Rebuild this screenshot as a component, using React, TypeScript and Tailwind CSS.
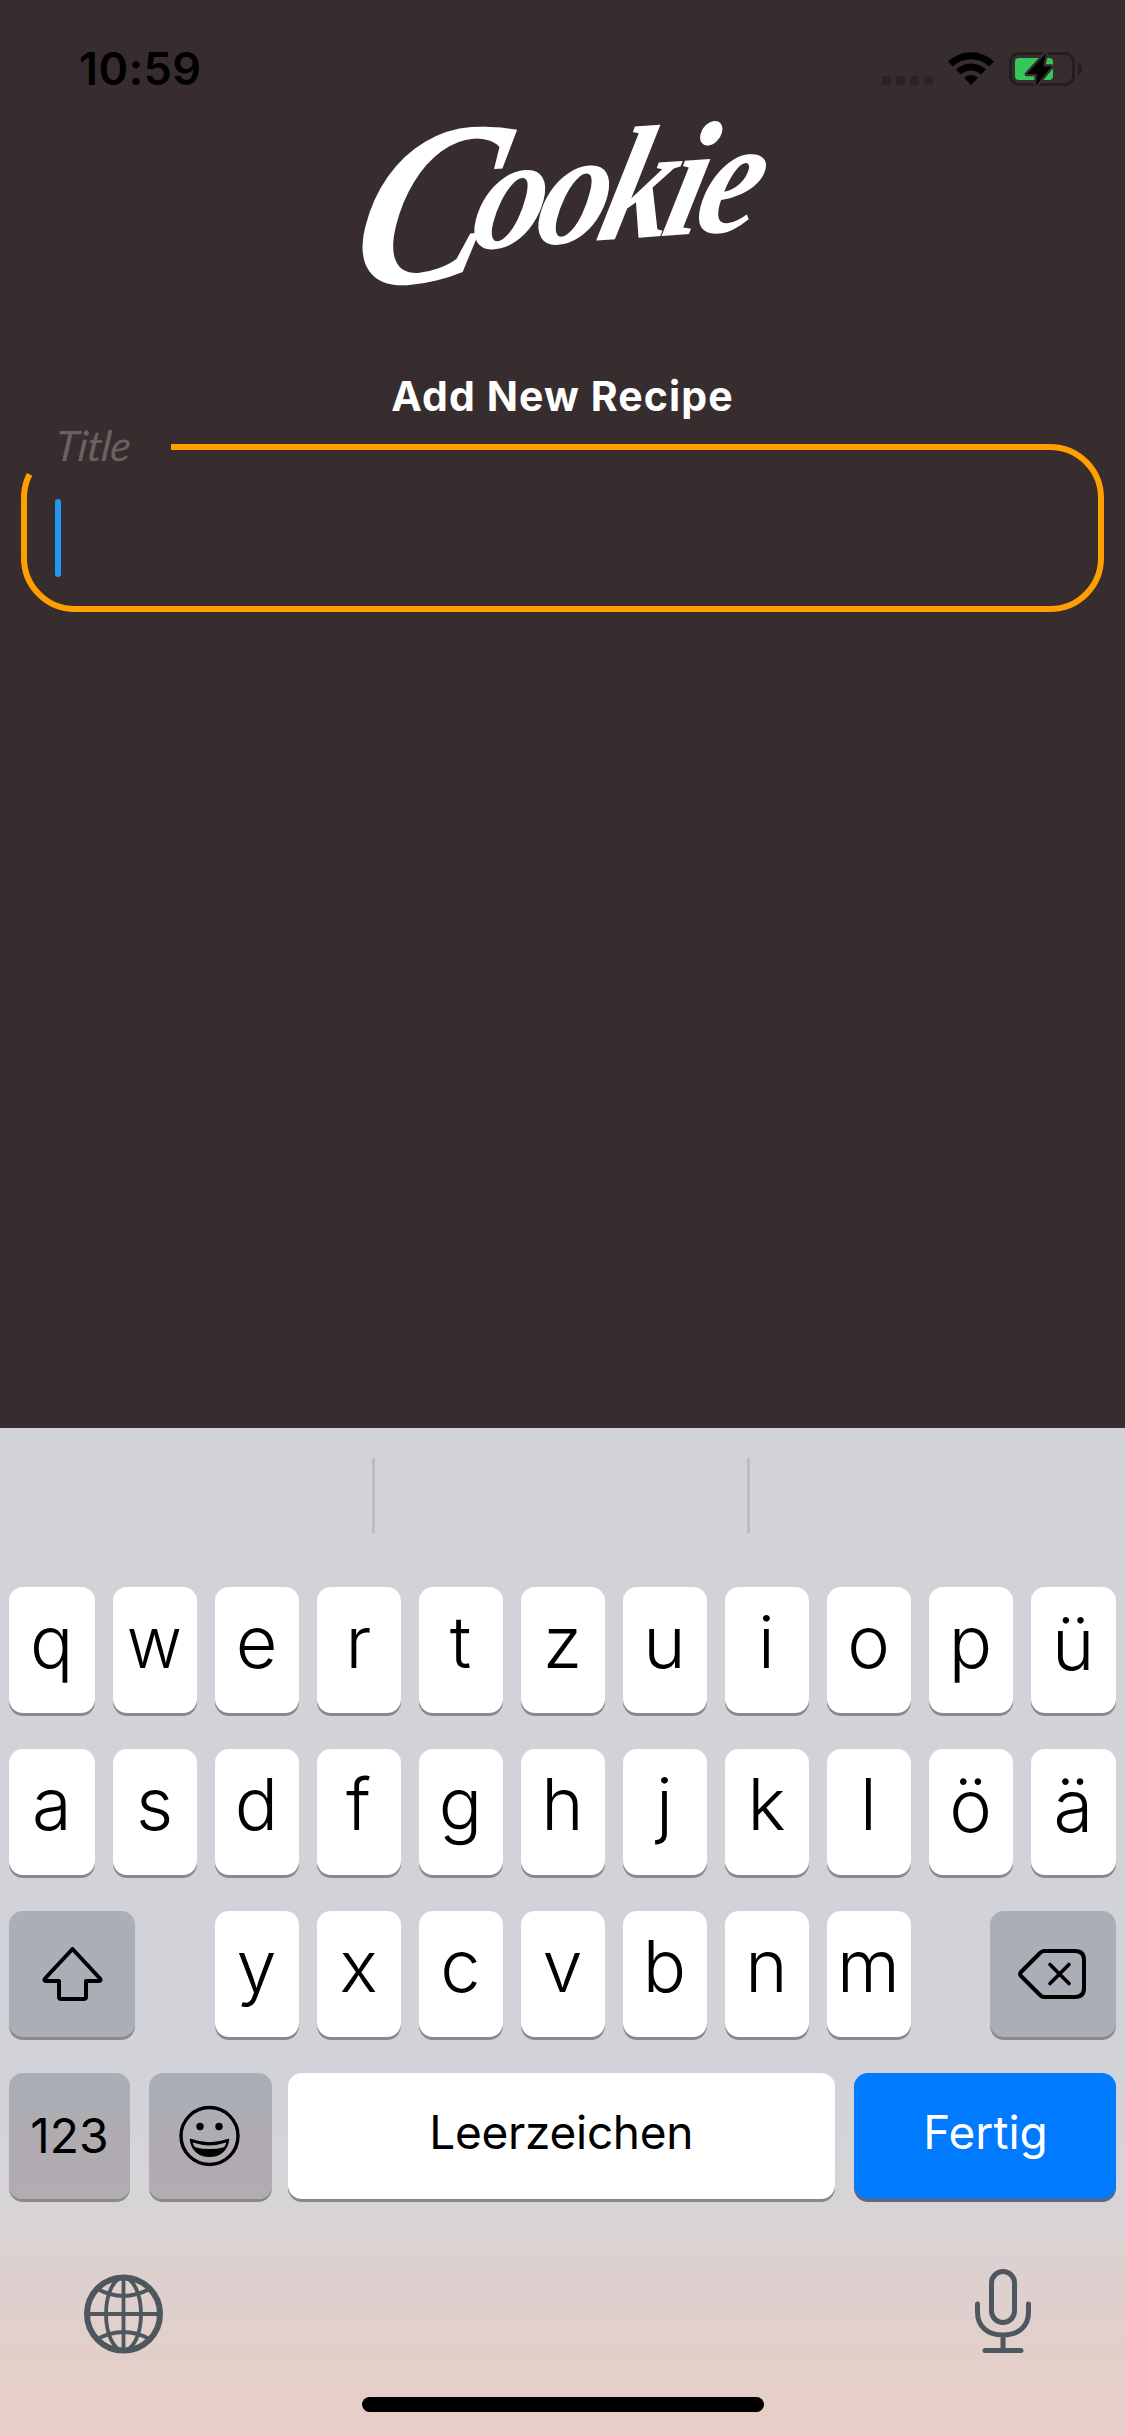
import type { ReactNode } from "react";

function StatusBar() {
  return (
    <div className="flex h-[120px] items-start justify-between pl-[79px] pr-[43px]">
      <span className="pt-[42px] text-[45px] font-semibold leading-[54px] tracking-[0.5px] text-black">10:59</span>
      <div className="flex items-start pt-[52px]">
        <div className="mr-[15px] flex gap-[5px] pt-6">
          <i className="size-[9px] rounded-[3px] bg-[#2a2324]" />
          <i className="size-[9px] rounded-[3px] bg-[#2a2324]" />
          <i className="size-[9px] rounded-[3px] bg-[#2a2324]" />
          <i className="size-[9px] rounded-[3px] bg-[#2a2324]" />
        </div>
        <svg className="mr-[15px] block h-[33px] w-[46px]" viewBox="0 0 46 33">
          <path d="M0 9.5A33.5 33.5 0 0 1 46 9.5L41.2 14.4A26.5 26.5 0 0 0 4.8 14.4Z" />
          <path d="M8 17.6A21.5 21.5 0 0 1 38 17.6L33 22.6A14.5 14.5 0 0 0 13 22.6Z" />
          <path d="M16 25.8A10 10 0 0 1 30 25.8L23 33Z" />
        </svg>
        <svg className="block h-[35px] w-[73px]" viewBox="0 0 73 35">
          <rect x="1.5" y="1.5" width="63" height="31" rx="8.5" fill="none" stroke="#231d1d" strokeWidth="3" />
          <path d="M69 10.5Q73 12.5 73 17T69 23.5Z" fill="#231d1d" />
          <rect x="6" y="6" width="38" height="22" rx="4" fill="#34c759" />
          <path d="M37 1.5L18 22H28L27 33.5L42.5 14.5H34Z" stroke="#372d2e" strokeWidth="4.5" strokeLinejoin="round" />
          <path d="M37 1.5L18 22H28L27 33.5L42.5 14.5H34Z" />
        </svg>
      </div>
    </div>
  );
}

function Logo() {
  return (
    <div className="flex h-[242px] justify-center">
      <h1 className="flex h-[180px] -translate-x-[2px] -translate-y-[15px] -rotate-[4deg] -skew-x-[20deg] scale-x-[0.89] items-baseline whitespace-nowrap font-['Liberation_Serif',serif] font-bold italic text-white">
        <span className="text-[228px] leading-[180px] tracking-[-22px]">C</span>
        <span className="-translate-y-[29px] text-[160px] leading-[180px] tracking-[-8px]">ookie</span>
      </h1>
    </div>
  );
}

function TitleField() {
  return (
    <div className="relative mx-[21px] h-[168px] rounded-[54px] border-[6px] border-[#ffa000]">
      <div className="absolute -left-[8px] -top-[12px] h-[66px] w-[152px] bg-[#372d2e] [clip-path:polygon(0_0,100%_0,100%_34px,57px_60px,8px_35px,0_31px)]" />
      <label className="absolute left-[29px] -top-[31px] -skew-x-6 font-['Lato',sans-serif] text-[42px] italic leading-[52px] tracking-[-0.5px] text-[#696262]">
        Title
      </label>
      <span className="absolute left-[28px] top-[49px] h-[78px] w-[6px] rounded-full bg-[#2196f3]" />
    </div>
  );
}

const keyBase = "flex h-[126px] shrink-0 justify-center rounded-[14px] shadow-[0_3px_0_#89898d]";

function Letter({ ch, edge }: { ch: string; edge?: boolean }) {
  const umlaut = "üöä".includes(ch);
  return (
    <button
      className={`${keyBase} bg-white text-[72px] font-[350] text-black ${edge ? "w-[85.5px]" : "w-[84px]"} ${umlaut ? "leading-[114px]" : "leading-[110px]"}`}
    >
      <span className={ch === "w" ? "scale-x-[0.94]" : ""}>{ch}</span>
    </button>
  );
}

function LetterRow({ letters }: { letters: string }) {
  return (
    <div className="flex gap-[18px]">
      {letters.split("").map((ch, i) => (
        <Letter key={ch} ch={ch} edge={i === 0 || i === letters.length - 1} />
      ))}
    </div>
  );
}

function IconKey({ className, children }: { className: string; children: ReactNode }) {
  return <button className={`${keyBase} items-center ${className}`}>{children}</button>;
}

function Keyboard() {
  return (
    <div className="flex h-[1008px] flex-col bg-[linear-gradient(#d2d3d8_0px,#d2d3d8_640px,#d6d4d7_770px,#ddd0cf_850px,#e3cfc9_930px,#e8cec6_1008px)]">
      <div className="flex h-[159px] pt-[30px]">
        <div className="h-[75px] w-[375px] border-r-[3px] border-[#bcbdc2]" />
        <div className="h-[75px] w-[375px] border-r-[3px] border-[#bcbdc2]" />
      </div>
      <div className="flex flex-col gap-9 px-[9px]">
        <LetterRow letters="qwertzuiopü" />
        <LetterRow letters="asdfghjklöä" />
        <div className="flex justify-between">
          <IconKey className="w-[126px] bg-[#abaeb7]">
            <svg className="h-[54px] w-[62px] translate-x-[0.5px]" viewBox="0 0 62 54" fill="none" stroke="black" strokeWidth="4" strokeLinejoin="round">
              <path d="M31 2L58.5 31.5Q60 34 57 34H44.5V50Q44.5 52 42 52H20Q17.5 52 17.5 50V34H5Q2 34 3.5 31.5Z" />
            </svg>
          </IconKey>
          <div className="flex gap-[18px]">
            {"yxcvbnm".split("").map((ch) => (
              <Letter key={ch} ch={ch} />
            ))}
          </div>
          <IconKey className="w-[126px] bg-[#abaeb7]">
            <svg className="h-[50px] w-[68px] -translate-x-px" viewBox="0 0 68 50" fill="none" stroke="black" strokeWidth="4" strokeLinejoin="round" strokeLinecap="round">
              <path d="M26 2H57Q66 2 66 11V39Q66 48 57 48H26Q24 48 22 46L3 27Q1 25 3 23L22 4Q24 2 26 2Z" />
              <path d="M32 15.5L51 34.5M51 15.5L32 34.5" strokeWidth="3.6" />
            </svg>
          </IconKey>
        </div>
        <div className="flex">
          <button className={`${keyBase} mr-[18.5px] w-[121px] bg-[linear-gradient(#abaeb7_30%,#afadb1_34%,#b0abb1_70%,#b2adb1)] text-[48px] leading-[125px]`}>
            123
          </button>
          <IconKey className="mr-[16.5px] w-[123px] bg-[linear-gradient(#abaeb7_30%,#afadb1_34%,#b0abb1_70%,#b2adb1)]">
            <svg className="h-[62px] w-[62px] -translate-x-[0.5px]" viewBox="0 0 62 62">
              <circle cx="31" cy="31" r="28.5" fill="none" stroke="black" strokeWidth="3.4" />
              <circle cx="21.5" cy="21.5" r="3.7" />
              <circle cx="40.5" cy="21.5" r="3.7" />
              <path d="M12 34.5Q31 41.5 50 34.5C49 45 41 51.3 31 51.3S13 45 12 34.5Z" stroke="black" strokeWidth="1.5" strokeLinejoin="round" />
              <path d="M14.2 37.6Q31 43.2 47.8 37.6C47.5 39.3 46.5 41 45.5 42.2Q31 46 16.5 42.2C15.5 41 14.5 39.3 14.2 37.6Z" fill="#b0adb3" />
            </svg>
          </IconKey>
          <button className={`${keyBase} mr-[19px] w-[546.5px] bg-white text-[46px] leading-[118px] tracking-[-0.3px]`}>
            Leerzeichen
          </button>
          <button className="flex h-[126px] w-[262px] justify-center rounded-[14px] bg-[#007aff] text-[46px] leading-[118px] text-white shadow-[0_3px_0_#66666b]">
            <span className="translate-x-px">Fertig</span>
          </button>
        </div>
      </div>
      <div className="flex justify-between pl-[83px] pr-[93px] pt-[69px]">
        <svg className="mt-[6px] block size-[80px]" viewBox="0 0 80 80" fill="none" stroke="#4f575e" strokeWidth="3.8">
          <circle cx="40.5" cy="40" r="36.5" strokeWidth="6" />
          <ellipse cx="40.5" cy="40" rx="17.5" ry="36.5" />
          <path d="M40.5 4V76M4 40H77M14.5 15Q40.5 29 66.5 15M14.5 65Q40.5 51 66.5 65" />
        </svg>
        <svg className="block h-[86px] w-[58px]" viewBox="0 0 58 86" fill="none" stroke="#4f575e" strokeWidth="5" strokeLinecap="round">
          <rect x="17.5" y="3.5" width="23" height="51" rx="11.5" />
          <path d="M3.5 36V44C3.5 59 14 67 29 67S54.5 59 54.5 44V36M29 67V82M11 82.5H47" />
        </svg>
      </div>
      <div className="mx-auto mt-auto mb-6 h-[15px] w-[402px] rounded-full bg-black" />
    </div>
  );
}

export default function App() {
  return (
    <main className="flex h-[2436px] w-[1125px] flex-col overflow-hidden bg-[#372d2e] font-['Inter',sans-serif] text-black">
      <StatusBar />
      <Logo />
      <h2 className="mb-[9px] h-[73px] w-full pt-[9px] text-center text-[41px] font-bold leading-[50px] tracking-[1.1px] text-white">
        Add New Recipe
      </h2>
      <TitleField />
      <div className="grow" />
      <Keyboard />
    </main>
  );
}
